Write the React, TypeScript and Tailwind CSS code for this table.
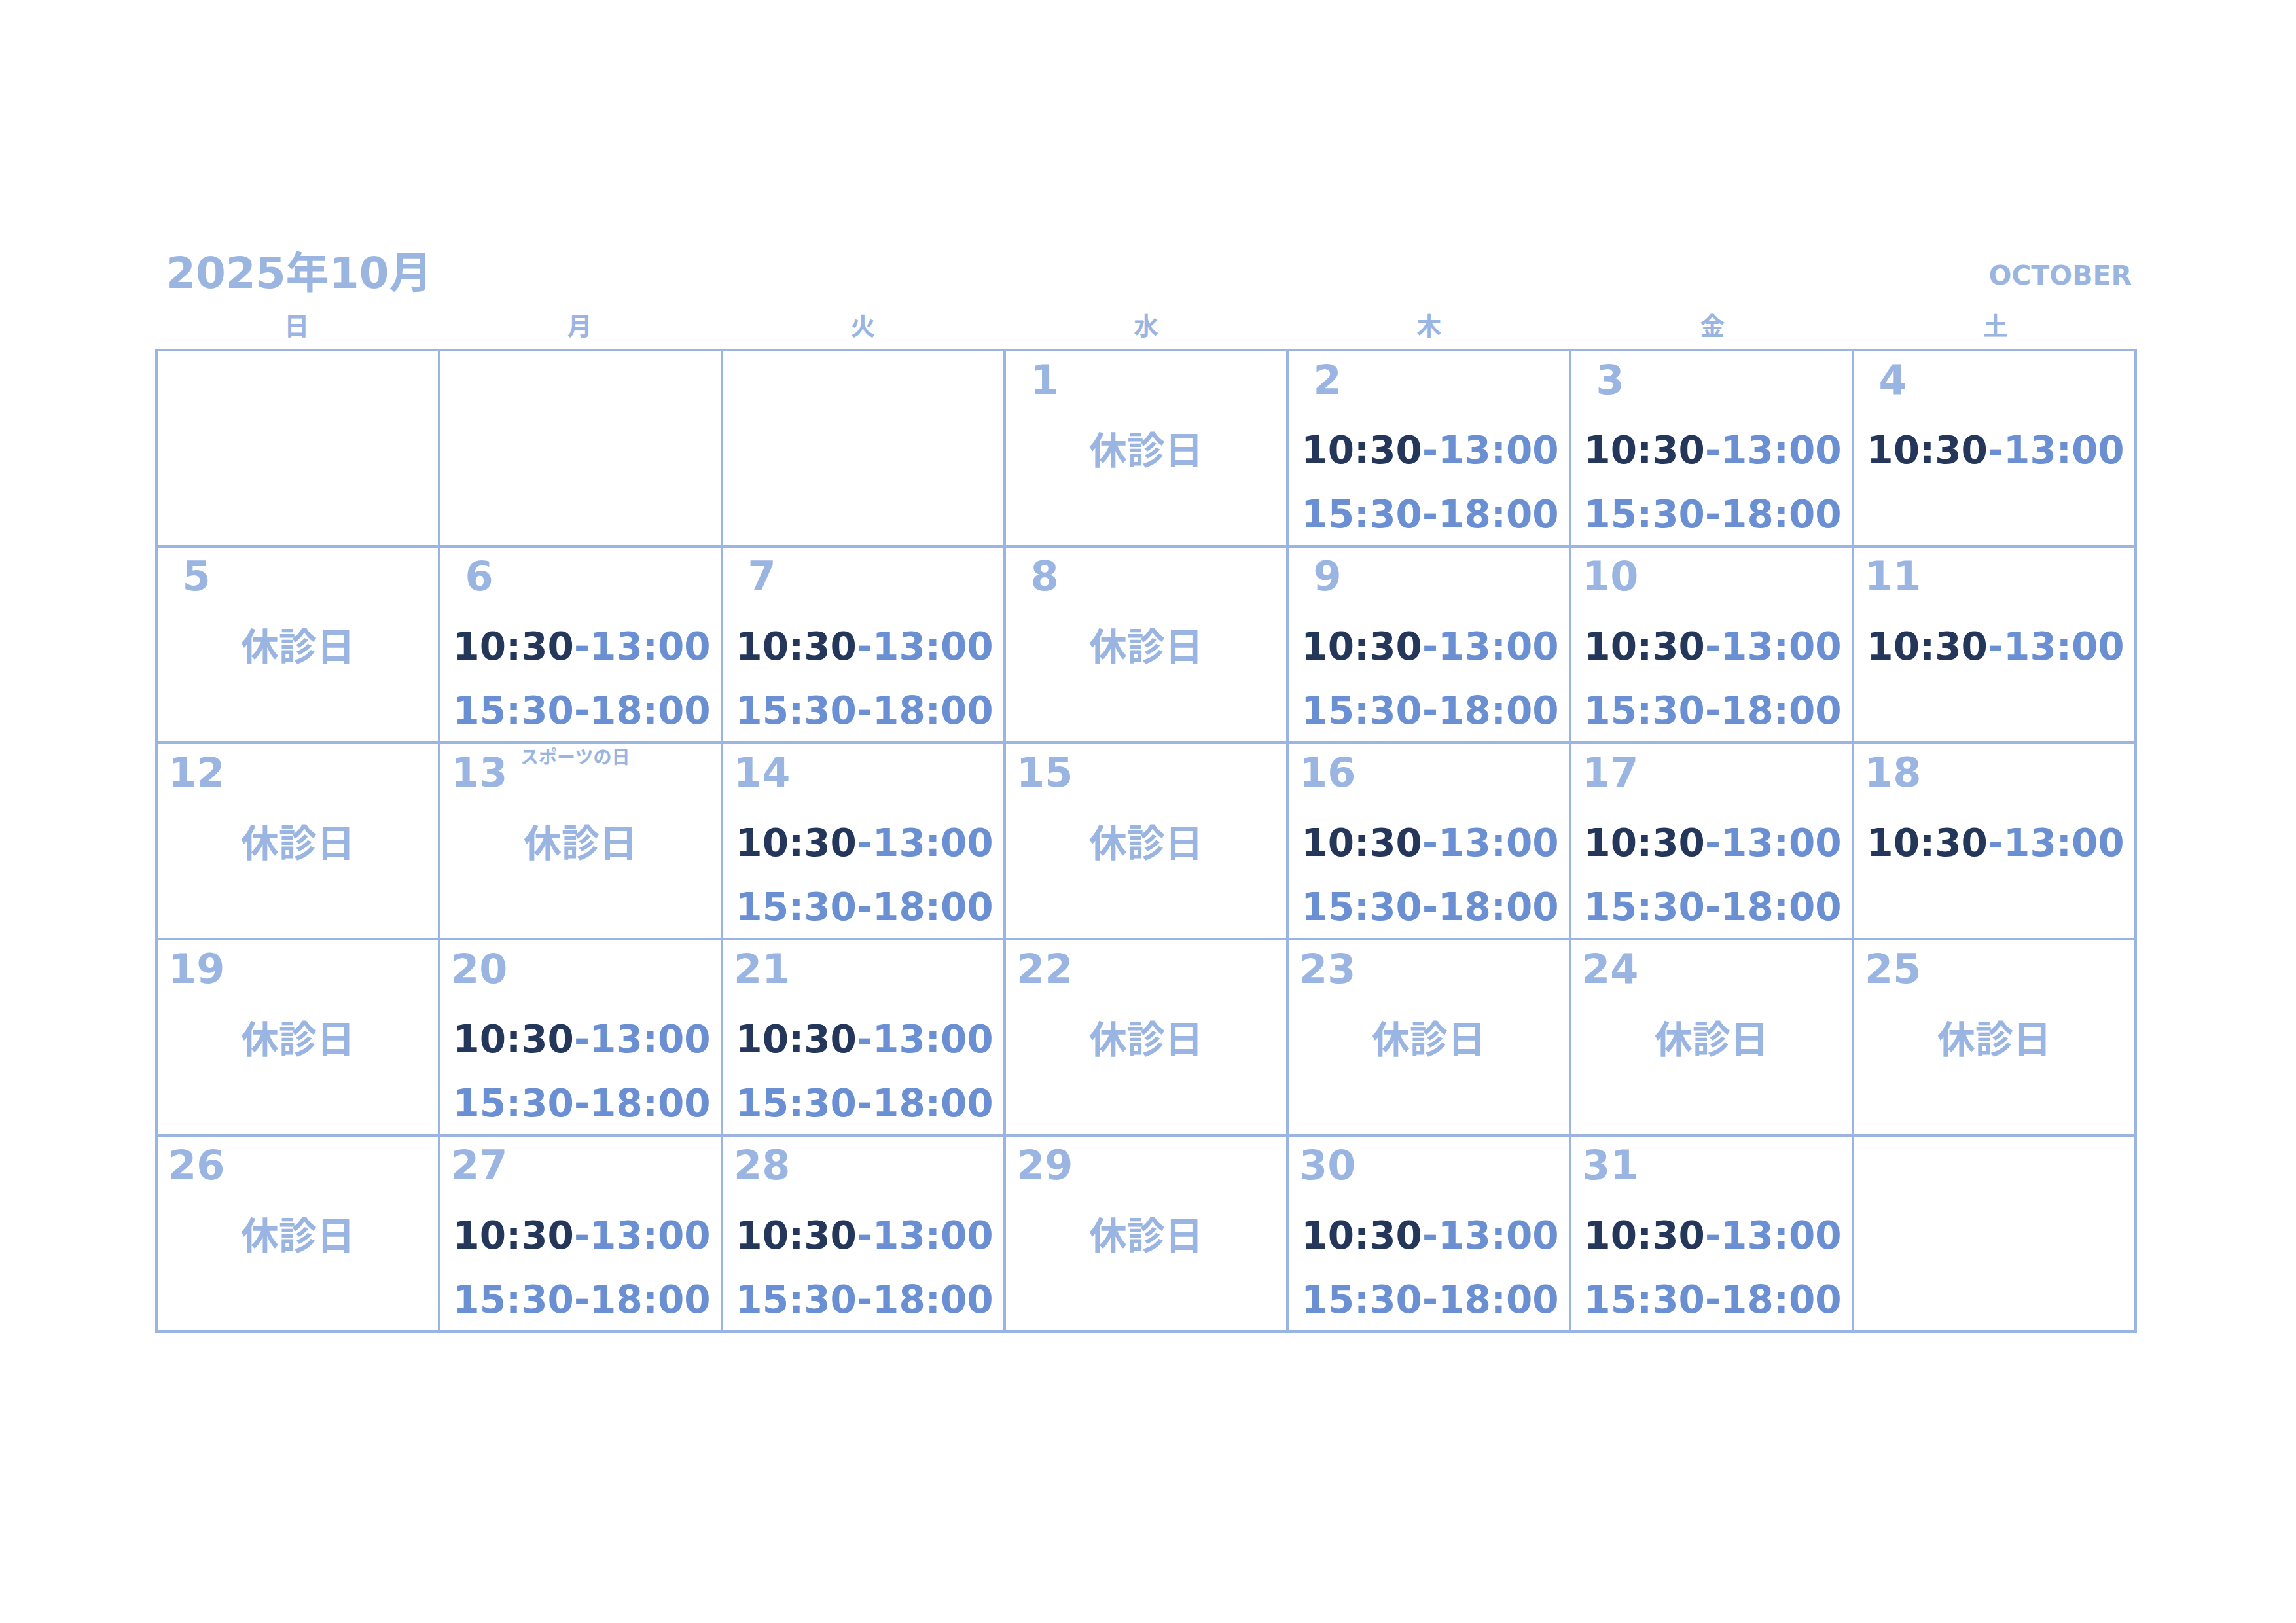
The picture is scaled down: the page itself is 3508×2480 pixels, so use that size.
import React from 'react';

type Kind = 'none' | 'off' | 'full' | 'half';

interface Day {
  n?: number;
  kind: Kind;
  note?: string;
}

const weekdays = ['日', '月', '火', '水', '木', '金', '土'];

const weeks: Day[][] = [
  [{ kind: 'none' }, { kind: 'none' }, { kind: 'none' }, { n: 1, kind: 'off' }, { n: 2, kind: 'full' }, { n: 3, kind: 'full' }, { n: 4, kind: 'half' }],
  [{ n: 5, kind: 'off' }, { n: 6, kind: 'full' }, { n: 7, kind: 'full' }, { n: 8, kind: 'off' }, { n: 9, kind: 'full' }, { n: 10, kind: 'full' }, { n: 11, kind: 'half' }],
  [{ n: 12, kind: 'off' }, { n: 13, kind: 'off', note: 'スポーツの日' }, { n: 14, kind: 'full' }, { n: 15, kind: 'off' }, { n: 16, kind: 'full' }, { n: 17, kind: 'full' }, { n: 18, kind: 'half' }],
  [{ n: 19, kind: 'off' }, { n: 20, kind: 'full' }, { n: 21, kind: 'full' }, { n: 22, kind: 'off' }, { n: 23, kind: 'off' }, { n: 24, kind: 'off' }, { n: 25, kind: 'off' }],
  [{ n: 26, kind: 'off' }, { n: 27, kind: 'full' }, { n: 28, kind: 'full' }, { n: 29, kind: 'off' }, { n: 30, kind: 'full' }, { n: 31, kind: 'full' }, { kind: 'none' }],
];

const latin = "font-['DejaVu_Sans','Noto_Sans_CJK_JP',sans-serif]";
const jp = "font-['Noto_Sans_CJK_JP',sans-serif]";

const Cell: React.FC<{ day: Day }> = ({ day }) => {
  return (
    <div className="h-[300px] border-r-4 border-b-4 border-[#9ab5e2] flex flex-col">
      {day.n !== undefined && (
        <div className="flex items-start h-[75px]">
          <div className={`ml-[16px] w-[86px] pt-[13px] text-center text-[62px] leading-[62px] font-bold text-[#9ab5e2] ${latin}`}>
            {day.n}
          </div>
          {day.note && (
            <div className={`ml-[20px] pt-[4px] text-[28px] leading-[28px] font-bold text-[#9ab5e2] ${jp}`}>
              {day.note}
            </div>
          )}
        </div>
      )}
      {day.kind === 'off' && (
        <div className={`mt-[23px] text-center text-[58px] leading-[98px] font-bold text-[#9ab5e2] ${jp}`}>
          休診日
        </div>
      )}
      {(day.kind === 'full' || day.kind === 'half') && (
        <div className={`mt-[27px] pl-[4px] text-center text-[58px] leading-[98px] font-bold ${latin}`}>
          <div>
            <span className="text-[#24375b]">10:30</span>
            <span className="text-[#6a8fd2]">-13:00</span>
          </div>
          {day.kind === 'full' && <div className="text-[#6a8fd2]">15:30-18:00</div>}
        </div>
      )}
    </div>
  );
};

const App: React.FC = () => {
  return (
    <div className="w-[3508px] h-[2480px] bg-white pt-[374px] pl-[237px]">
      <div className="w-[3028px]">
        <div className="flex items-center justify-between h-[80px]">
          <div className={`pl-[16px] pt-[8px] text-[66px] leading-[80px] font-bold text-[#9ab5e0] ${latin}`}>
            2025年10月
          </div>
          <div className={`mt-[14px] pr-[8px] text-[41px] leading-[41px] font-bold text-[#9ab5e0] ${latin}`}>
            OCTOBER
          </div>
        </div>
        <div className="grid grid-cols-7 h-[79px]">
          {weekdays.map((w) => (
            <div key={w} className={`pt-[23px] text-center text-[38px] leading-[38px] font-bold text-[#9ab5e2] ${jp}`}>
              {w}
            </div>
          ))}
        </div>
        <div className="border-l-4 border-t-4 border-[#9ab5e2]">
          {weeks.map((week, i) => (
            <div key={i} className="grid grid-cols-7">
              {week.map((day, j) => (
                <Cell key={j} day={day} />
              ))}
            </div>
          ))}
        </div>
      </div>
    </div>
  );
};

export default App;
